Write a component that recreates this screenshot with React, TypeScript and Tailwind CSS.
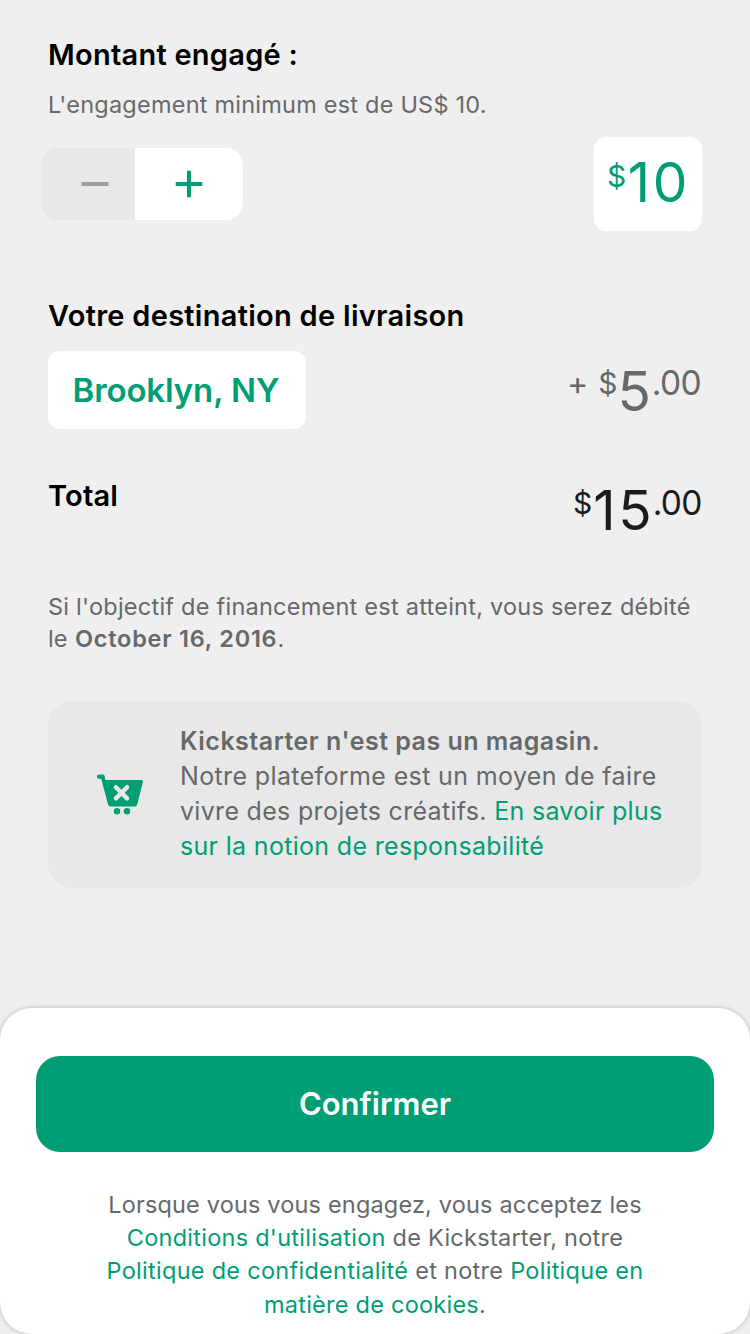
import type { ReactNode } from "react";

function Line({ className, children }: { className: string; children: ReactNode }) {
  return <span className={"block whitespace-pre " + className}>{children}</span>;
}

function Link({ children }: { children: ReactNode }) {
  return <a className="text-[#009e74]">{children}</a>;
}

function Heading({ className, children }: { className: string; children: ReactNode }) {
  return <h2 className={"h-9 whitespace-nowrap text-[29px] leading-9 font-semibold text-black " + className}>{children}</h2>;
}

function Stepper() {
  return (
    <div className="-ml-[7px] flex h-[72px] w-[202px] overflow-hidden rounded-[17px]">
      <button className="flex w-[94px] items-center bg-[#e8e8e8] pl-[40px]" aria-label="-">
        <svg width="28" height="28" viewBox="0 0 28 28" stroke="#9b9e9e" strokeWidth="4">
          <path d="M0.5 14H27.5" />
        </svg>
      </button>
      <button className="flex w-[108px] items-center justify-center bg-white" aria-label="+">
        <svg width="28" height="28" viewBox="0 0 28 28" stroke="#009e74" strokeWidth="4">
          <path d="M0.7 14H27.3M14 0.7V27.3" />
        </svg>
      </button>
    </div>
  );
}

function CartIcon() {
  return (
    <svg className="block" width="48" height="44" viewBox="0 0 48 44" fill="none">
      <path
        d="M3 0.6H7.2Q8.3 0.6 8.5 1.7L9.3 6H45.4Q47.4 6.1 46.9 8L41.3 30.3Q40.7 32.5 38.8 32.5H14.6Q12.5 32.5 12 30.3L5.2 4.8H3A2.1 2.1 0 0 1 3 0.6Z"
        fill="#009e74"
      />
      <path d="M19.9 13.2L31.1 24.4M31.1 13.2L19.9 24.4" stroke="#e8e8e8" strokeWidth="4.4" strokeLinecap="round" />
      <circle cx="21" cy="37.2" r="3.2" fill="#009e74" />
      <circle cx="31" cy="37.2" r="3.2" fill="#009e74" />
    </svg>
  );
}

export default function App() {
  return (
    <div className="flex h-[1334px] w-[750px] flex-col overflow-hidden bg-[#efefef] font-['Inter','Liberation_Sans',sans-serif]">
      <main className="flex h-[1008px] flex-col px-12 pt-[37px]">
        <Heading className="tracking-[0.25px]">Montant engagé :</Heading>
        <p className="mt-4 h-8 text-[23.5px] leading-8 tracking-[0.22px] whitespace-nowrap text-[#696969]">
          L'engagement minimum est de US$ 10.
        </p>
        <div className="mt-4 flex h-[94px] items-center justify-between">
          <Stepper />
          <div className="flex h-[94px] w-[108px] items-start rounded-[12px] bg-white pl-[13px] text-[#009e74]">
            <span className="mt-6 text-[30px] leading-none">$</span>
            <span className="mt-[18px] ml-[1.5px] text-[55px] leading-none tracking-[2.6px]">10</span>
          </div>
        </div>

        <Heading className="mt-[67px] tracking-[0.28px]">Votre destination de livraison</Heading>
        <div className="mt-[17px] flex h-[78px] justify-between">
          <button className="w-[258px] rounded-[12px] bg-white pr-0.5 text-[33px] leading-[78px] font-semibold tracking-[-0.12px] whitespace-nowrap text-[#009e74]">
            Brooklyn, NY
          </button>
          <div className="flex w-[134px] items-start whitespace-nowrap text-[#656969]">
            <span className="mt-[17px] -ml-px text-[32px] leading-none">+</span>
            <span className="mt-[17px] ml-[10px] text-[30px] leading-none">$</span>
            <span className="mt-[13px] text-[55px] leading-none">5</span>
            <span className="mt-4 ml-px text-[33.5px] leading-none tracking-[-0.7px]">.00</span>
          </div>
        </div>

        <div className="mt-[49px] flex h-[69px] justify-between">
          <Heading className="tracking-[0.2px]">Total</Heading>
          <div className="flex w-[128px] items-start whitespace-nowrap text-[#1b1b1b]">
            <span className="mt-[10px] -ml-px text-[30px] leading-none">$</span>
            <span className="mt-[5px] ml-px text-[55px] leading-none tracking-[2.6px]">15</span>
            <span className="mt-[9px] -ml-[1.5px] text-[33.5px] leading-none tracking-[-0.7px]">.00</span>
          </div>
        </div>

        <p className="mt-[44px] text-[23.5px] leading-8 text-[#656969]">
          <Line className="tracking-[0.24px]">Si l'objectif de financement est atteint, vous serez débité</Line>
          <Line className="">
            le <b className="ml-px font-semibold tracking-[0.76px]">October 16, 2016</b>.
          </Line>
        </p>

        <aside className="mt-[46px] flex h-[187px] rounded-[24px] bg-[#e8e8e8] pl-12">
          <div className="w-[84px] pt-[73px]">
            <CartIcon />
          </div>
          <p className="pt-[23px] text-[25px] leading-[35px] text-[#656969]">
            <Line className="font-semibold tracking-[0.49px]">Kickstarter n'est pas un magasin.</Line>
            <Line className="tracking-[0.37px]">Notre plateforme est un moyen de faire</Line>
            <Line className="tracking-[0.31px]">
              vivre des projets créatifs. <Link>En savoir plus</Link>
            </Line>
            <Line className="tracking-[0.32px]">
              <Link>sur la notion de responsabilité</Link>
            </Line>
          </p>
        </aside>
      </main>

      <footer className="h-[326px] rounded-[32px] bg-white px-9 pt-12 shadow-[0_0_5px_rgba(0,0,0,0.24)]">
        <button className="block h-24 w-full rounded-[24px] bg-[#009e74] text-[31px] leading-[96px] font-semibold text-white">
          Confirmer
        </button>
        <p className="mt-9 text-center text-[23.5px] leading-[33.2px] text-[#656969]">
          <Line className="tracking-[0.17px]">Lorsque vous vous engagez, vous acceptez les</Line>
          <Line className="tracking-[0.26px]">
            <Link>Conditions d'utilisation</Link> de Kickstarter, notre
          </Line>
          <Line className="tracking-[0.28px]">
            <Link>Politique de confidentialité</Link> et notre <Link>Politique en</Link>
          </Line>
          <Line className="tracking-[0.243px]">
            <Link>matière de cookies</Link>.
          </Line>
        </p>
      </footer>
    </div>
  );
}
